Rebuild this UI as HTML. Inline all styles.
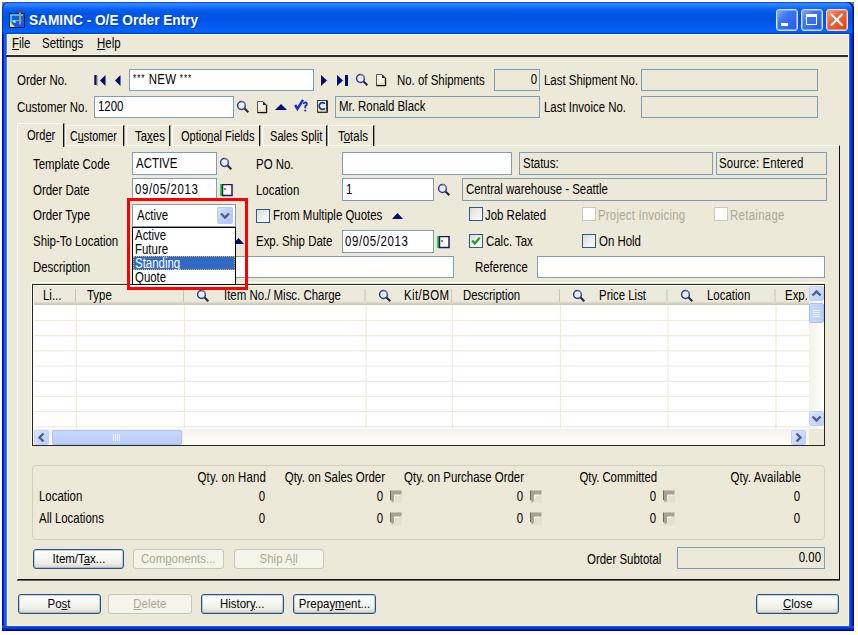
<!DOCTYPE html>
<html><head><meta charset="utf-8">
<style>
*{margin:0;padding:0;box-sizing:border-box}
html,body{width:858px;height:635px;background:#fff;overflow:hidden;position:relative}
body{font-family:"Liberation Sans",sans-serif;font-size:12px;color:#000}
.a{position:absolute}
.t{position:absolute;white-space:nowrap;line-height:14px;font-size:14px;transform:scaleX(.817);transform-origin:0 0;margin-top:-1px}
.r{text-align:right;transform-origin:100% 0}
.u{text-decoration:underline}
.box{position:absolute;background:#fff;border:1px solid #7F9DB9}
.ro{position:absolute;background:#ECE9D8;border:1px solid #7F9DB9}
.cb{position:absolute;width:14px;height:14px;border:1px solid #2A5A90;background:linear-gradient(135deg,#DCDCD7,#fff)}
.cbd{position:absolute;width:14px;height:14px;border:1px solid #CAC8BB;background:#fff}
.btn{position:absolute;border:1px solid #24528A;border-radius:3px;box-shadow:inset 0 0 0 1px rgba(90,130,185,.35);background:linear-gradient(#fff,#F0F0EA 70%,#D8D5C8);text-align:center;line-height:18px;font-size:13px}
.s{display:inline-block;transform:scaleX(.88);white-space:nowrap}
.btnd{position:absolute;border:1px solid #C9C7BA;border-radius:3px;background:#F5F4EA;text-align:center;line-height:18px;color:#ACA899;font-size:13px}
.g{color:#ACA899}
</style></head><body>

<!-- window frame -->
<div class="a" style="left:2px;top:2px;width:6px;height:6px;background:#7A7468"></div>
<div class="a" style="left:848px;top:2px;width:6px;height:6px;background:#7A7468"></div>
<div class="a" style="left:2px;top:2px;width:852px;height:629px;background:linear-gradient(90deg,#0000C0 1px,#0028E0 1px,#0028E0 2px,#1565F0 2px,#1565F0 3px,#0858E8 3px,#0858E8 4px,#5A80D0 4px,#5A80D0 5px,transparent 5px,transparent 847px,#3060E0 847px,#3060E0 848px,#0040F8 848px,#0040F8 849px,#0038E0 849px,#0038E0 850px,#0020B0 850px,#0020B0 851px,#000088 851px);border-radius:7px 7px 0 0"></div>
<div class="a" style="left:2px;top:2px;width:852px;height:32px;border-radius:7px 7px 0 0;box-shadow:inset 1px 0 0 #0030C8,inset -1px 0 0 #00129A,inset -2px 0 0 #0030D0;background:linear-gradient(#0846D8 0px,#3D8BFF 2px,#1F7BFF 4px,#0A63F0 7px,#0055E5 11px,#0054E3 19px,#005DF3 25px,#0064FA 30px,#003DD4 32px)"></div>
<div class="a" style="left:2px;top:626px;width:852px;height:5px;background:linear-gradient(#2050E8 1px,#0040F0 1px,#0040F0 2px,#0038D8 2px,#0038D8 3px,#0020A8 3px,#0020A8 4px,#000080 4px)"></div>
<div class="a" style="left:7px;top:34px;width:842px;height:592px;background:#ECE9D8"></div>
<div class="a" style="left:7px;top:34px;width:842px;height:1px;background:#FFF8E0"></div>
<div class="a" style="left:7px;top:34px;width:1px;height:592px;background:#FFF5D8"></div>
<div class="a" style="left:848px;top:34px;width:1px;height:592px;background:#FFF5D8"></div>
<div class="a" style="left:7px;top:625px;width:842px;height:1px;background:#FFF5D8"></div>
<!-- title icon -->
<svg class="a" style="left:9px;top:10px" width="17" height="19" viewBox="0 0 17 19">
<rect x="0" y="3" width="16" height="15" fill="#0A1466"/>
<rect x="1" y="4" width="14" height="13" fill="#1A56F0"/>
<path d="M2 16 V5 H14" fill="none" stroke="#22EEF8" stroke-width="1.6"/>
<path d="M2 10.5 H13" stroke="#22C8F0" stroke-width="1.2"/>
<path d="M1 17 V12 L6 17 Z" fill="#F8F020"/>
<path d="M3 12 L6 10 L7 13 Z" fill="#E8E8F8"/>
<rect x="10" y="1.5" width="2" height="13" fill="#B0A030"/>
<rect x="10" y="0.5" width="2" height="2" fill="#C02050"/>
</svg>
<div class="t" style="left:29px;top:13px;font-weight:bold;font-size:15px;line-height:16px;color:#fff;transform:scaleX(.91);text-shadow:1px 1px 0 #0A3AB8">SAMINC - O/E Order Entry</div>

<!-- caption buttons -->
<div class="a" style="left:776px;top:9px;width:22px;height:22px;border:1px solid #D6E2FB;border-radius:3px;box-shadow:inset 0 0 0 1px #7FA4F2;background:linear-gradient(135deg,#8AAEF8,#3E78F2 35%,#2F68EE 70%,#2458E4)"></div>
<div class="a" style="left:781px;top:23px;width:7px;height:3px;background:#fff"></div>
<div class="a" style="left:801px;top:9px;width:22px;height:22px;border:1px solid #D6E2FB;border-radius:3px;box-shadow:inset 0 0 0 1px #7FA4F2;background:linear-gradient(135deg,#8AAEF8,#3E78F2 35%,#2F68EE 70%,#2458E4)"></div>
<div class="a" style="left:806px;top:14px;width:11px;height:11px;border:1.5px solid #fff;border-top-width:3px"></div>
<div class="a" style="left:826px;top:9px;width:22px;height:22px;border:1px solid #F4D6CC;border-radius:3px;box-shadow:inset 0 0 0 1px #F09070;background:linear-gradient(135deg,#F4A080,#E86640 40%,#E2552C 70%,#D04418)"></div>
<svg class="a" style="left:826px;top:9px" width="22" height="22"><path d="M5 5 L16.5 16.5 M16.5 5 L5 16.5" stroke="#fff" stroke-width="2"/></svg>

<!-- menu -->
<div class="t" style="left:12px;top:37px"><span class="u">F</span>ile</div>
<div class="t" style="left:42px;top:37px">Settings</div>
<div class="t" style="left:97px;top:37px"><span class="u">H</span>elp</div>
<div class="a" style="left:6px;top:54px;width:842px;height:1px;background:#fff"></div>
<div class="a" style="left:6px;top:55px;width:842px;height:2px;background:#2E2C28"></div>


<!-- header row 1 -->
<div class="t" style="left:17px;top:74px">Order No.</div>
<svg class="a" style="left:93px;top:74px" width="30" height="13" viewBox="0 0 30 13">
<rect x="1.3" y="1" width="2.4" height="10" fill="#000C7A"/><rect x="3.7" y="2" width="1" height="10" fill="#A09E92"/><path d="M12.5 1 L7 6.5 L12.5 12 Z" fill="#000C7A"/>
<path d="M27.5 1 L22 6.5 L27.5 12 Z" fill="#000C7A"/>
</svg>
<div class="box" style="left:129px;top:69px;width:185px;height:22px"></div>
<div class="t" style="left:133px;top:73px"><span style="font-size:10px;vertical-align:2px;letter-spacing:1.2px">***</span> <span style="letter-spacing:0.5px">NEW</span> <span style="font-size:10px;vertical-align:2px;letter-spacing:1.2px">***</span></div>
<svg class="a" style="left:319px;top:74px" width="32" height="13" viewBox="0 0 32 13">
<path d="M2 1 L8 6.5 L2 12 Z" fill="#000C7A"/>
<path d="M18 1 L24 6.5 L18 12 Z" fill="#000C7A"/><rect x="26" y="1" width="3" height="11" fill="#000C7A"/>
</svg>
<svg class="a" style="left:355px;top:73px" width="14" height="14" viewBox="0 0 14 14"><circle cx="5.5" cy="5.5" r="3.9" fill="#E6F0FF" stroke="#2A3A9A" stroke-width="1.5"/><path d="M5.5 1.6 A3.9 3.9 0 0 1 9.4 5.5" fill="none" stroke="#8A8A98" stroke-width="1.3"/><path d="M8.6 8.6 L12.3 12.3" stroke="#2A2A2A" stroke-width="2.1"/></svg>
<svg class="a" style="left:375px;top:73px" width="12" height="14" viewBox="0 0 12 14"><path d="M1.5 1.5 H7 L10.5 5 V12.5 H1.5 Z" fill="#F2F2EA" stroke="#555" stroke-width="1"/><path d="M10.5 5 V12.5 H1.5" fill="none" stroke="#111" stroke-width="1.4"/><path d="M7 1.5 V5 H10.5 Z" fill="#222"/><rect x="2.2" y="10.3" width="7.6" height="1.6" fill="#E4DC9C"/></svg>
<div class="t" style="left:397px;top:74px">No. of Shipments</div>
<div class="ro" style="left:494px;top:69px;width:46px;height:22px"></div>
<div class="t r" style="left:450px;top:73px;width:87px">0</div>
<div class="t" style="left:544px;top:74px">Last Shipment No.</div>
<div class="ro" style="left:641px;top:69px;width:177px;height:22px"></div>

<!-- header row 2 -->
<div class="t" style="left:17px;top:101px">Customer No.</div>
<div class="box" style="left:94px;top:96px;width:140px;height:22px"></div>
<div class="t" style="left:98px;top:100px">1200</div>
<svg class="a" style="left:236px;top:100px" width="14" height="14" viewBox="0 0 14 14"><circle cx="5.5" cy="5.5" r="3.9" fill="#E6F0FF" stroke="#2A3A9A" stroke-width="1.5"/><path d="M5.5 1.6 A3.9 3.9 0 0 1 9.4 5.5" fill="none" stroke="#8A8A98" stroke-width="1.3"/><path d="M8.6 8.6 L12.3 12.3" stroke="#2A2A2A" stroke-width="2.1"/></svg>
<svg class="a" style="left:256px;top:100px" width="12" height="14" viewBox="0 0 12 14"><path d="M1.5 1.5 H7 L10.5 5 V12.5 H1.5 Z" fill="#F2F2EA" stroke="#555" stroke-width="1"/><path d="M10.5 5 V12.5 H1.5" fill="none" stroke="#111" stroke-width="1.4"/><path d="M7 1.5 V5 H10.5 Z" fill="#222"/><rect x="2.2" y="10.3" width="7.6" height="1.6" fill="#E4DC9C"/></svg>
<svg class="a" style="left:274px;top:103px" width="14" height="8" viewBox="0 0 14 8"><path d="M1 7 L7 1 L13 7 Z" fill="#000C7A"/></svg>
<svg class="a" style="left:293px;top:98px" width="16" height="15" viewBox="0 0 16 15">
<path d="M2.2 7 L4.4 10.8 L10 1.8" fill="none" stroke="#1A2FD0" stroke-width="2.5"/>
<path d="M10.6 6.2 Q10.8 4.4 12.3 4.4 Q13.9 4.4 13.8 6.1 Q13.7 7.4 12.3 8.3 V10.2" fill="none" stroke="#1A2FB8" stroke-width="1.8"/><rect x="11.4" y="11.6" width="1.8" height="1.8" fill="#1A2FB8"/>
</svg>
<svg class="a" style="left:316px;top:99px" width="13" height="15" viewBox="0 0 13 15">
<rect x="1.5" y="1.5" width="9.5" height="11.5" fill="#EEEEF4" stroke="#444"/><path d="M11 1.5 V13 H1.5" fill="none" stroke="#111" stroke-width="1.5"/>
<circle cx="6.3" cy="7" r="2.6" fill="#D8F2FF"/><path d="M9 4.6 A3.4 3.4 0 1 0 9 9.4" fill="none" stroke="#23338F" stroke-width="1.7"/>
<rect x="2" y="11.2" width="8.5" height="1.5" fill="#E0D898"/>
</svg>
<div class="ro" style="left:335px;top:96px;width:205px;height:22px"></div>
<div class="t" style="left:339px;top:100px">Mr. Ronald Black</div>
<div class="t" style="left:544px;top:101px">Last Invoice No.</div>
<div class="ro" style="left:641px;top:96px;width:177px;height:22px"></div>

<!-- tabs -->
<div class="a" style="left:17px;top:145px;width:823px;height:435px;border-left:1px solid #fff;border-top:1px solid #fff;border-right:1px solid #111;border-bottom:1px solid #151515;box-shadow:0 1px 0 #6A685E"></div>


<!-- tab strip -->
<div class="a" style="left:65px;top:125px;width:59px;height:21px;border-top:1px solid #fff;border-left:1px solid #fff;border-right:1px solid #111;box-shadow:1px 0 0 #A09E92"></div>
<div class="a" style="left:126px;top:125px;width:44px;height:21px;border-top:1px solid #fff;border-left:1px solid #fff;border-right:1px solid #111;box-shadow:1px 0 0 #A09E92"></div>
<div class="a" style="left:172px;top:125px;width:88px;height:21px;border-top:1px solid #fff;border-left:1px solid #fff;border-right:1px solid #111;box-shadow:1px 0 0 #A09E92"></div>
<div class="a" style="left:262px;top:125px;width:65px;height:21px;border-top:1px solid #fff;border-left:1px solid #fff;border-right:1px solid #111;box-shadow:1px 0 0 #A09E92"></div>
<div class="a" style="left:328px;top:125px;width:46px;height:21px;border-top:1px solid #fff;border-left:1px solid #fff;border-right:1px solid #111;box-shadow:1px 0 0 #A09E92"></div>
<div class="a" style="left:17px;top:123px;width:47px;height:24px;background:#ECE9D8;border-top:1px solid #fff;border-left:1px solid #fff;border-right:1px solid #111;box-shadow:1px 0 0 #A09E92;border-top-left-radius:2px"></div>
<div class="t" style="left:27px;top:129px;transform:scaleX(.79)">Ord<span class="u">e</span>r</div>
<div class="t" style="left:70px;top:130px;transform:scaleX(.771)">C<span class="u">u</span>stomer</div>
<div class="t" style="left:135px;top:130px">Ta<span class="u">x</span>es</div>
<div class="t" style="left:181px;top:130px;transform:scaleX(.786)">Optio<span class="u">n</span>al Fields</div>
<div class="t" style="left:270px;top:130px;transform:scaleX(.791)">Sales Spl<span class="u">i</span>t</div>
<div class="t" style="left:338px;top:130px">T<span class="u">o</span>tals</div>

<!-- row A -->
<div class="t" style="left:33px;top:158px">Template Code</div>
<div class="box" style="left:132px;top:152px;width:85px;height:23px"></div>
<div class="t" style="left:136px;top:157px">ACTIVE</div>
<svg class="a" style="left:219px;top:157px" width="14" height="14" viewBox="0 0 14 14"><circle cx="5.5" cy="5.5" r="3.9" fill="#E6F0FF" stroke="#2A3A9A" stroke-width="1.5"/><path d="M5.5 1.6 A3.9 3.9 0 0 1 9.4 5.5" fill="none" stroke="#8A8A98" stroke-width="1.3"/><path d="M8.6 8.6 L12.3 12.3" stroke="#2A2A2A" stroke-width="2.1"/></svg>
<div class="t" style="left:256px;top:158px">PO No.</div>
<div class="box" style="left:342px;top:152px;width:170px;height:23px"></div>
<div class="ro" style="left:519px;top:152px;width:194px;height:23px"></div>
<div class="t" style="left:523px;top:157px">Status:</div>
<div class="ro" style="left:716px;top:152px;width:111px;height:23px"></div>
<div class="t" style="left:719px;top:157px;letter-spacing:0.15px">Source: Entered</div>

<!-- row B -->
<div class="t" style="left:33px;top:184px">Order Date</div>
<div class="box" style="left:132px;top:178px;width:85px;height:23px"></div>
<div class="t" style="left:135px;top:183px;letter-spacing:0.75px">09/05/2013</div>
<svg class="a" style="left:220px;top:184px" width="13" height="13" viewBox="0 0 13 13">
<rect x="0" y="0" width="2" height="12" fill="#22DD22"/><rect x="2.5" y="0.5" width="9.5" height="11" fill="#FFFFF0" stroke="#1A1A70" stroke-width="1.5"/><rect x="4" y="4" width="2" height="2" fill="#E040E0"/>
</svg>
<div class="t" style="left:256px;top:184px">Location</div>
<div class="box" style="left:342px;top:178px;width:92px;height:23px"></div>
<div class="t" style="left:346px;top:183px">1</div>
<svg class="a" style="left:437px;top:183px" width="14" height="14" viewBox="0 0 14 14"><circle cx="5.5" cy="5.5" r="3.9" fill="#E6F0FF" stroke="#2A3A9A" stroke-width="1.5"/><path d="M5.5 1.6 A3.9 3.9 0 0 1 9.4 5.5" fill="none" stroke="#8A8A98" stroke-width="1.3"/><path d="M8.6 8.6 L12.3 12.3" stroke="#2A2A2A" stroke-width="2.1"/></svg>
<div class="ro" style="left:462px;top:178px;width:365px;height:23px"></div>
<div class="t" style="left:466px;top:183px">Central warehouse - Seattle</div>

<!-- row C -->
<div class="t" style="left:33px;top:209px">Order Type</div>
<div class="box" style="left:132px;top:204px;width:104px;height:23px"></div>
<div class="t" style="left:137px;top:209px">Active</div>
<div class="a" style="left:217px;top:207px;width:16px;height:17px;border-radius:2px;background:linear-gradient(135deg,#D4E0FC,#BCCEF8 60%,#AFC8F8);border:1px solid #B9CCF6"></div>
<svg class="a" style="left:217px;top:207px" width="16" height="17"><path d="M4 6.5 L8 10.5 L12 6.5" fill="none" stroke="#4D6185" stroke-width="2.4"/></svg>
<div class="cb" style="left:256px;top:209px"></div>
<div class="t" style="left:273px;top:209px">From Multiple Quotes</div>
<svg class="a" style="left:391px;top:212px" width="13" height="8" viewBox="0 0 13 8"><path d="M1 7 L6.5 1 L12 7 Z" fill="#000C7A"/></svg>
<div class="cb" style="left:469px;top:207px"></div>
<div class="t" style="left:485px;top:209px">Job Related</div>
<div class="cbd" style="left:582px;top:207px"></div>
<div class="t g" style="left:598px;top:209px;letter-spacing:0.25px">Project Invoicing</div>
<div class="cbd" style="left:714px;top:207px"></div>
<div class="t g" style="left:730px;top:209px;letter-spacing:0.35px">Retainage</div>

<!-- row D -->
<div class="t" style="left:33px;top:235px">Ship-To Location</div>
<svg class="a" style="left:232px;top:237px" width="13" height="8" viewBox="0 0 13 8"><path d="M1 7 L6.5 1 L12 7 Z" fill="#000C7A"/></svg>
<div class="t" style="left:256px;top:235px">Exp. Ship Date</div>
<div class="box" style="left:342px;top:230px;width:92px;height:23px"></div>
<div class="t" style="left:345px;top:235px;letter-spacing:0.75px">09/05/2013</div>
<svg class="a" style="left:437px;top:236px" width="13" height="13" viewBox="0 0 13 13">
<rect x="0" y="0" width="2" height="12" fill="#22DD22"/><rect x="2.5" y="0.5" width="9.5" height="11" fill="#FFFFF0" stroke="#1A1A70" stroke-width="1.5"/><rect x="4" y="4" width="2" height="2" fill="#E040E0"/>
</svg>
<div class="cb" style="left:469px;top:234px"></div>
<svg class="a" style="left:469px;top:234px" width="14" height="14"><path d="M3.2 6.5 L5.8 9.5 L10.8 3.8" fill="none" stroke="#21A121" stroke-width="2.2"/></svg>
<div class="t" style="left:486px;top:235px">Calc. Tax</div>
<div class="cb" style="left:582px;top:234px"></div>
<div class="t" style="left:599px;top:235px">On Hold</div>

<!-- row E -->
<div class="t" style="left:33px;top:261px">Description</div>
<div class="box" style="left:132px;top:256px;width:322px;height:22px"></div>
<div class="t" style="left:475px;top:261px">Reference</div>
<div class="box" style="left:537px;top:256px;width:288px;height:22px"></div>


<!-- grid -->
<div class="a" style="left:31px;top:282px;width:796px;height:166px;border-top:1px solid #FFFCEE;border-left:1px solid #FFFCEE"></div>
<div class="a" style="left:32px;top:284px;width:793px;height:162px;background:#fff;border:1px solid #262622;border-right-width:1px"></div>
<div class="a" style="left:33px;top:285px;width:776px;height:20px;background:linear-gradient(#EBEADB,#EBEADB 80%,#D6D2C2 90%,#CBC7B8);border-top:1px solid #fff;border-left:1px solid #fff"></div>
<svg class="a" style="left:0;top:0" width="858" height="635">
<g stroke="#EFEBDC" stroke-width="1.2"><line x1="34" y1="320.5" x2="809" y2="320.5"/><line x1="34" y1="335.7" x2="809" y2="335.7"/><line x1="34" y1="350.9" x2="809" y2="350.9"/><line x1="34" y1="366.1" x2="809" y2="366.1"/><line x1="34" y1="381.3" x2="809" y2="381.3"/><line x1="34" y1="396.5" x2="809" y2="396.5"/><line x1="34" y1="411.7" x2="809" y2="411.7"/><line x1="34" y1="426.9" x2="809" y2="426.9"/><line x1="76.5" y1="305" x2="76.5" y2="429"/><line x1="184.5" y1="305" x2="184.5" y2="429"/><line x1="366" y1="305" x2="366" y2="429"/><line x1="452.5" y1="305" x2="452.5" y2="429"/><line x1="560.5" y1="305" x2="560.5" y2="429"/><line x1="668" y1="305" x2="668" y2="429"/><line x1="776" y1="305" x2="776" y2="429"/></g>
<g stroke="#C8C5B4" stroke-width="1"><line x1="75.5" y1="289" x2="75.5" y2="302"/><line x1="183.5" y1="289" x2="183.5" y2="302"/><line x1="365" y1="289" x2="365" y2="302"/><line x1="451.5" y1="289" x2="451.5" y2="302"/><line x1="559.5" y1="289" x2="559.5" y2="302"/><line x1="667" y1="289" x2="667" y2="302"/><line x1="775" y1="289" x2="775" y2="302"/></g>
</svg>
<div class="t" style="left:43px;top:289px">Li...</div>
<div class="t" style="left:87px;top:289px">Type</div>
<svg class="a" style="left:196px;top:289px" width="14" height="14" viewBox="0 0 14 14"><circle cx="5.5" cy="5.5" r="3.9" fill="#E6F0FF" stroke="#2A3A9A" stroke-width="1.5"/><path d="M5.5 1.6 A3.9 3.9 0 0 1 9.4 5.5" fill="none" stroke="#8A8A98" stroke-width="1.3"/><path d="M8.6 8.6 L12.3 12.3" stroke="#2A2A2A" stroke-width="2.1"/></svg>
<div class="t" style="left:224px;top:289px">Item No./ Misc. Charge</div>
<svg class="a" style="left:378px;top:289px" width="14" height="14" viewBox="0 0 14 14"><circle cx="5.5" cy="5.5" r="3.9" fill="#E6F0FF" stroke="#2A3A9A" stroke-width="1.5"/><path d="M5.5 1.6 A3.9 3.9 0 0 1 9.4 5.5" fill="none" stroke="#8A8A98" stroke-width="1.3"/><path d="M8.6 8.6 L12.3 12.3" stroke="#2A2A2A" stroke-width="2.1"/></svg>
<div class="t" style="left:404px;top:289px;letter-spacing:0.5px">Kit/BOM</div>
<div class="t" style="left:463px;top:289px">Description</div>
<svg class="a" style="left:572px;top:289px" width="14" height="14" viewBox="0 0 14 14"><circle cx="5.5" cy="5.5" r="3.9" fill="#E6F0FF" stroke="#2A3A9A" stroke-width="1.5"/><path d="M5.5 1.6 A3.9 3.9 0 0 1 9.4 5.5" fill="none" stroke="#8A8A98" stroke-width="1.3"/><path d="M8.6 8.6 L12.3 12.3" stroke="#2A2A2A" stroke-width="2.1"/></svg>
<div class="t" style="left:599px;top:289px">Price List</div>
<svg class="a" style="left:680px;top:289px" width="14" height="14" viewBox="0 0 14 14"><circle cx="5.5" cy="5.5" r="3.9" fill="#E6F0FF" stroke="#2A3A9A" stroke-width="1.5"/><path d="M5.5 1.6 A3.9 3.9 0 0 1 9.4 5.5" fill="none" stroke="#8A8A98" stroke-width="1.3"/><path d="M8.6 8.6 L12.3 12.3" stroke="#2A2A2A" stroke-width="2.1"/></svg>
<div class="t" style="left:707px;top:289px">Location</div>
<div class="t" style="left:785px;top:289px;width:27px;overflow:hidden">Exp.</div>
<!-- v scrollbar -->
<div class="a" style="left:809px;top:286px;width:15px;height:143px;background:linear-gradient(90deg,#F3F1EC,#FEFEFB)"></div>
<div class="a" style="left:809px;top:286px;width:15px;height:15px;border-radius:2px;background:linear-gradient(135deg,#DCE6FD,#B9CEFA);border:1px solid #BCD0F8"></div>
<svg class="a" style="left:809px;top:286px" width="15" height="15"><path d="M3.5 9.5 L7.5 5.5 L11.5 9.5" fill="none" stroke="#4D6185" stroke-width="2.4"/></svg>
<div class="a" style="left:809px;top:303px;width:15px;height:20px;border-radius:2px;background:linear-gradient(90deg,#C9D8FC,#BACDF9);border:1px solid #A9C0F5"></div>
<svg class="a" style="left:809px;top:303px" width="15" height="20"><g stroke="#EEF3FE" stroke-width="1"><line x1="4" y1="7.5" x2="11" y2="7.5"/><line x1="4" y1="9.5" x2="11" y2="9.5"/><line x1="4" y1="11.5" x2="11" y2="11.5"/><line x1="4" y1="13.5" x2="11" y2="13.5"/></g></svg>
<div class="a" style="left:809px;top:411px;width:15px;height:15px;border-radius:2px;background:linear-gradient(135deg,#DCE6FD,#B9CEFA);border:1px solid #BCD0F8"></div>
<svg class="a" style="left:809px;top:411px" width="15" height="15"><path d="M3.5 5.5 L7.5 9.5 L11.5 5.5" fill="none" stroke="#4D6185" stroke-width="2.4"/></svg>
<!-- h scrollbar -->
<div class="a" style="left:34px;top:429px;width:775px;height:16px;background:linear-gradient(#F3F1EC,#FEFEFB)"></div>
<div class="a" style="left:34px;top:430px;width:15px;height:15px;border-radius:2px;background:linear-gradient(135deg,#DCE6FD,#B9CEFA);border:1px solid #BCD0F8"></div>
<svg class="a" style="left:34px;top:430px" width="15" height="15"><path d="M9.5 3.5 L5.5 7.5 L9.5 11.5" fill="none" stroke="#4D6185" stroke-width="2.4"/></svg>
<div class="a" style="left:52px;top:430px;width:130px;height:15px;border-radius:2px;background:linear-gradient(#C9D8FC,#BACDF9);border:1px solid #A9C0F5"></div>
<svg class="a" style="left:52px;top:430px" width="130" height="15"><g stroke="#EEF3FE" stroke-width="1"><line x1="61.5" y1="4" x2="61.5" y2="11"/><line x1="63.5" y1="4" x2="63.5" y2="11"/><line x1="65.5" y1="4" x2="65.5" y2="11"/><line x1="67.5" y1="4" x2="67.5" y2="11"/></g></svg>
<div class="a" style="left:791px;top:430px;width:15px;height:15px;border-radius:2px;background:linear-gradient(135deg,#DCE6FD,#B9CEFA);border:1px solid #BCD0F8"></div>
<svg class="a" style="left:791px;top:430px" width="15" height="15"><path d="M5.5 3.5 L9.5 7.5 L5.5 11.5" fill="none" stroke="#4D6185" stroke-width="2.4"/></svg>
<div class="a" style="left:809px;top:429px;width:15px;height:16px;background:#ECE9D8"></div>

<!-- dropdown list & red box -->
<div class="a" style="left:132px;top:227px;width:104px;height:58px;background:#fff;border:1px solid #000"></div>
<div class="a" style="left:133px;top:256px;width:102px;height:14px;background:#316AC5;outline:1px dotted #E8B040;outline-offset:-1px"></div>
<div class="t" style="left:135px;top:229px;line-height:14px">Active</div>
<div class="t" style="left:135px;top:243px;line-height:14px">Future</div>
<div class="t" style="left:135px;top:257px;line-height:14px;color:#fff">Standing</div>
<div class="t" style="left:135px;top:271px;line-height:14px">Quote</div>
<div class="a" style="left:127px;top:198px;width:121px;height:92px;border:3px solid #FF0000"></div>


<!-- qty group -->
<div class="a" style="left:32px;top:465px;width:793px;height:75px;border:1px solid #D0D0BF;border-radius:4px"></div>
<div class="t r" style="left:120px;top:471px;width:146px;letter-spacing:0.2px">Qty. on Hand</div>
<div class="t r" style="left:220px;top:471px;width:165px">Qty. on Sales Order</div>
<div class="t r" style="left:344px;top:471px;width:180px">Qty. on Purchase Order</div>
<div class="t r" style="left:520px;top:471px;width:137px;letter-spacing:-0.1px">Qty. Committed</div>
<div class="t r" style="left:659px;top:471px;width:142px;letter-spacing:0.15px">Qty. Available</div>
<div class="t" style="left:39px;top:490px">Location</div>
<div class="t" style="left:39px;top:512px">All Locations</div>
<div class="t r" style="left:159px;top:490px;width:106px">0</div>
<div class="t r" style="left:159px;top:512px;width:106px">0</div>
<div class="t r" style="left:279px;top:490px;width:104px">0</div>
<div class="t r" style="left:279px;top:512px;width:104px">0</div>
<div class="t r" style="left:419px;top:490px;width:104px">0</div>
<div class="t r" style="left:419px;top:512px;width:104px">0</div>
<div class="t r" style="left:552px;top:490px;width:104px">0</div>
<div class="t r" style="left:552px;top:512px;width:104px">0</div>
<div class="t r" style="left:696px;top:490px;width:104px">0</div>
<div class="t r" style="left:696px;top:512px;width:104px">0</div>
<svg class="a" style="left:390px;top:490px" width="12" height="13" viewBox="0 0 12 13"><rect x="0" y="0" width="12" height="13" fill="#E4E1D2"/><path d="M0.5 0.5 H11.5 V3.5 L9.5 5 H4.5 V9.5 L2.5 12.5 L0.5 10 Z" fill="#A8A491"/><path d="M0.5 0.5 V10" stroke="#6E6B5E" stroke-width="1"/><path d="M4.5 9.5 V5 H9.5" fill="none" stroke="#fff" stroke-width="1"/></svg><svg class="a" style="left:390px;top:512px" width="12" height="13" viewBox="0 0 12 13"><rect x="0" y="0" width="12" height="13" fill="#E4E1D2"/><path d="M0.5 0.5 H11.5 V3.5 L9.5 5 H4.5 V9.5 L2.5 12.5 L0.5 10 Z" fill="#A8A491"/><path d="M0.5 0.5 V10" stroke="#6E6B5E" stroke-width="1"/><path d="M4.5 9.5 V5 H9.5" fill="none" stroke="#fff" stroke-width="1"/></svg><svg class="a" style="left:530px;top:490px" width="12" height="13" viewBox="0 0 12 13"><rect x="0" y="0" width="12" height="13" fill="#E4E1D2"/><path d="M0.5 0.5 H11.5 V3.5 L9.5 5 H4.5 V9.5 L2.5 12.5 L0.5 10 Z" fill="#A8A491"/><path d="M0.5 0.5 V10" stroke="#6E6B5E" stroke-width="1"/><path d="M4.5 9.5 V5 H9.5" fill="none" stroke="#fff" stroke-width="1"/></svg><svg class="a" style="left:530px;top:512px" width="12" height="13" viewBox="0 0 12 13"><rect x="0" y="0" width="12" height="13" fill="#E4E1D2"/><path d="M0.5 0.5 H11.5 V3.5 L9.5 5 H4.5 V9.5 L2.5 12.5 L0.5 10 Z" fill="#A8A491"/><path d="M0.5 0.5 V10" stroke="#6E6B5E" stroke-width="1"/><path d="M4.5 9.5 V5 H9.5" fill="none" stroke="#fff" stroke-width="1"/></svg><svg class="a" style="left:663px;top:490px" width="12" height="13" viewBox="0 0 12 13"><rect x="0" y="0" width="12" height="13" fill="#E4E1D2"/><path d="M0.5 0.5 H11.5 V3.5 L9.5 5 H4.5 V9.5 L2.5 12.5 L0.5 10 Z" fill="#A8A491"/><path d="M0.5 0.5 V10" stroke="#6E6B5E" stroke-width="1"/><path d="M4.5 9.5 V5 H9.5" fill="none" stroke="#fff" stroke-width="1"/></svg><svg class="a" style="left:663px;top:512px" width="12" height="13" viewBox="0 0 12 13"><rect x="0" y="0" width="12" height="13" fill="#E4E1D2"/><path d="M0.5 0.5 H11.5 V3.5 L9.5 5 H4.5 V9.5 L2.5 12.5 L0.5 10 Z" fill="#A8A491"/><path d="M0.5 0.5 V10" stroke="#6E6B5E" stroke-width="1"/><path d="M4.5 9.5 V5 H9.5" fill="none" stroke="#fff" stroke-width="1"/></svg>
<!-- buttons in panel -->
<div class="btn" style="left:33px;top:549px;width:91px;height:20px"><span class="s">Item/T<span class="u">a</span>x...</span></div>
<div class="btnd" style="left:133px;top:549px;width:91px;height:20px"><span class="s">Com<span class="u">p</span>onents...</span></div>
<div class="btnd" style="left:234px;top:549px;width:90px;height:20px"><span class="s">Ship A<span class="u">l</span>l</span></div>
<div class="t" style="left:587px;top:553px">Order Subtotal</div>
<div class="ro" style="left:677px;top:547px;width:148px;height:22px"></div>
<div class="t r" style="left:699px;top:551px;width:122px">0.00</div>

<!-- bottom buttons -->
<div class="btn" style="left:18px;top:594px;width:83px;height:20px"><span class="s">Po<span class="u">s</span>t</span></div>
<div class="btnd" style="left:108px;top:594px;width:84px;height:20px"><span class="s"><span class="u">D</span>elete</span></div>
<div class="btn" style="left:201px;top:594px;width:83px;height:20px"><span class="s">Histor<span class="u">y</span>...</span></div>
<div class="btn" style="left:293px;top:594px;width:83px;height:20px"><span class="s">Prepay<span class="u">m</span>ent...</span></div>
<div class="btn" style="left:756px;top:594px;width:83px;height:20px"><span class="s"><span class="u">C</span>lose</span></div>

</body></html>
